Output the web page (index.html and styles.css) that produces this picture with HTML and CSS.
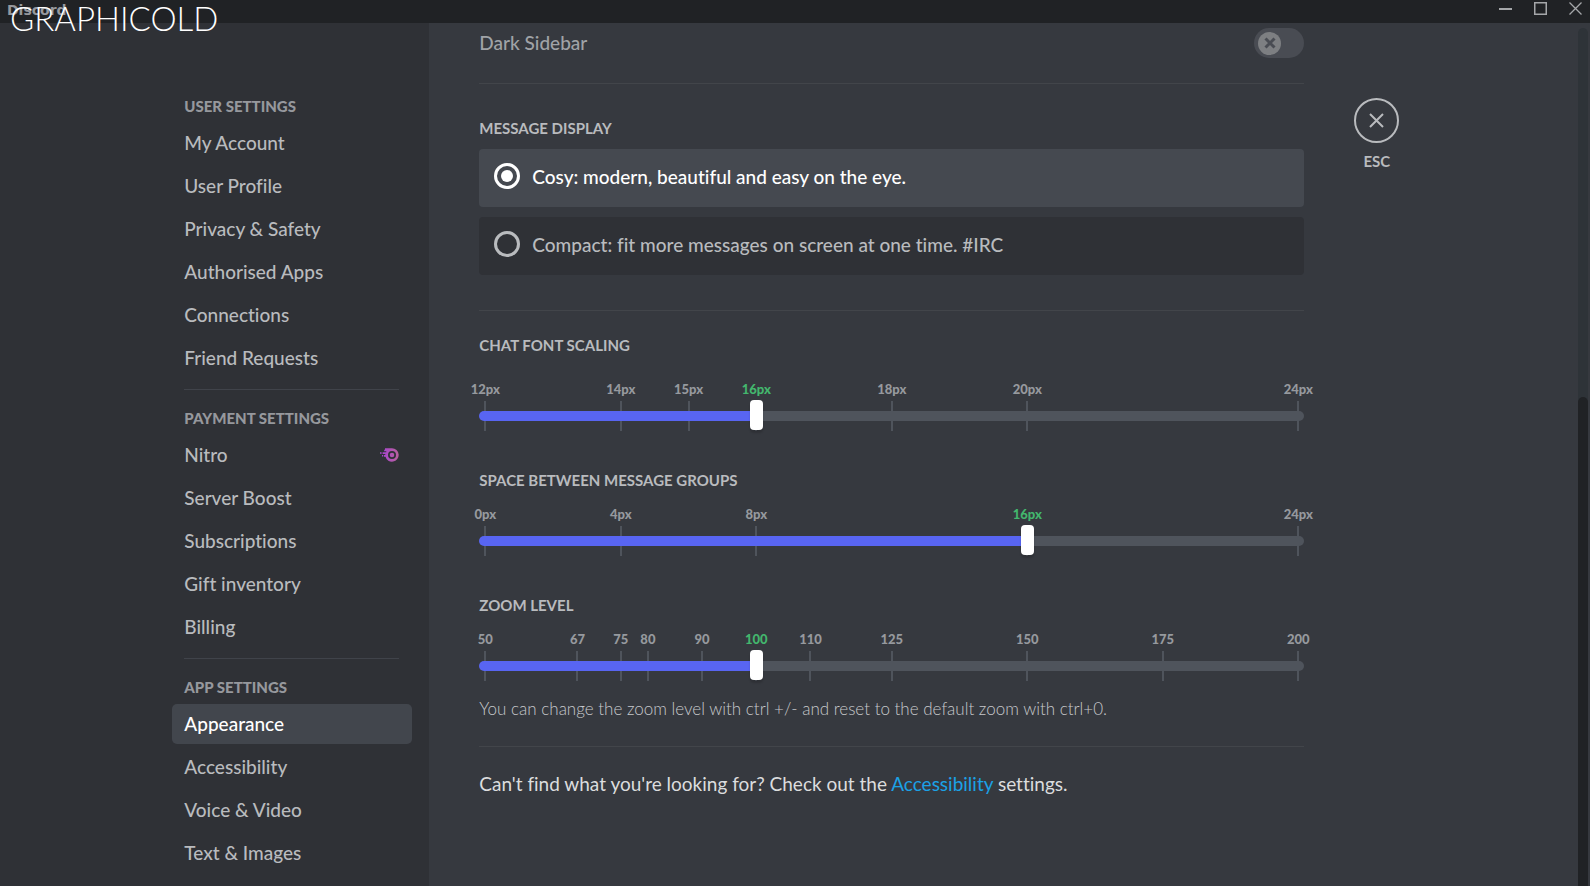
FILE: index.html
```html
<!DOCTYPE html>
<html lang="en">

<head>
    <meta charset="utf-8">
    <meta name="viewport" content="width=device-width, initial-scale=1">
    <title>Discord</title>
    <link rel="stylesheet" href="styles.css">
</head>

<body>
    <header class="titlebar">
        <span class="wordmark">Discord</span>
        <div class="window-buttons">
            <button type="button" aria-label="Minimise">
                <svg width="13" height="13" viewBox="0 0 13 13"><path d="M0 7H13" stroke-width="2" /></svg>
            </button>
            <button type="button" aria-label="Maximise">
                <svg width="13" height="13" viewBox="0 0 13 13"><path d="M.75 .75H12.25V12.25H.75Z" stroke-width="1.5" /></svg>
            </button>
            <button type="button" aria-label="Close window">
                <svg width="13" height="13" viewBox="0 0 13 13"><path d="M.5 .5L12.5 12.5M12.5 .5L.5 12.5" stroke-width="1.3" /></svg>
            </button>
        </div>
    </header>
    <div class="watermark">GRAPHICOLD</div>

    <div class="settings">
        <div class="sidebar">
            <nav class="menu">
                <h2>USER SETTINGS</h2>
                <ul>
                    <li><a href="#">My Account</a></li>
                    <li><a href="#">User Profile</a></li>
                    <li><a href="#">Privacy &amp; Safety</a></li>
                    <li><a href="#">Authorised Apps</a></li>
                    <li><a href="#">Connections</a></li>
                    <li><a href="#">Friend Requests</a></li>
                </ul>
                <hr>
                <h2>PAYMENT SETTINGS</h2>
                <ul>
                    <li><a href="#">Nitro
                        <svg class="nitro" width="19" height="14" viewBox="0 0 19 14">
                            <defs>
                                <linearGradient id="nitroFill" x1="0" x2="1">
                                    <stop offset="0" stop-color="#a845cf" />
                                    <stop offset="1" stop-color="#b8619c" />
                                </linearGradient>
                            </defs>
                            <path fill="url(#nitroFill)" fill-rule="evenodd" d="M5 .3H12A6.7 6.7 0 1 1 5.5 8.7H4V7H5.3V6H2.6V4.3H6.3V3.2H4.2V1.8H5ZM12 3A4 4 0 1 0 12 11A4 4 0 1 0 12 3ZM12 4.7A2.3 2.3 0 1 1 12 9.3A2.3 2.3 0 1 1 12 4.7Z" />
                            <path fill="#a845cf" d="M0 4.3H1.6V5.8H0ZM2 7H3.2V8.5H2Z" />
                        </svg></a></li>
                    <li><a href="#">Server Boost</a></li>
                    <li><a href="#">Subscriptions</a></li>
                    <li><a href="#">Gift inventory</a></li>
                    <li><a href="#">Billing</a></li>
                </ul>
                <hr>
                <h2>APP SETTINGS</h2>
                <ul>
                    <li><a href="#" class="selected">Appearance</a></li>
                    <li><a href="#">Accessibility</a></li>
                    <li><a href="#">Voice &amp; Video</a></li>
                    <li><a href="#">Text &amp; Images</a></li>
                </ul>
            </nav>
        </div>

        <main class="content">
            <div class="column">
                <div class="switch-row">
                    <label for="darkSidebar">Dark Sidebar</label>
                    <span class="switch">
                        <input type="checkbox" id="darkSidebar" disabled>
                        <svg width="12" height="12" viewBox="0 0 12 12"><path d="M1.5 1.5L10.5 10.5M10.5 1.5L1.5 10.5" /></svg>
                    </span>
                </div>
                <hr>

                <h3 class="display-title">MESSAGE DISPLAY</h3>
                <div class="options">
                    <label class="option">
                        <input type="radio" name="display" checked>
                        <span>Cosy: modern, beautiful and easy on the eye.</span>
                    </label>
                    <label class="option">
                        <input type="radio" name="display">
                        <span>Compact: fit more messages on screen at one time. #IRC</span>
                    </label>
                </div>
                <hr>

                <section class="setting font-scaling">
                    <h3><label for="fontScale">CHAT FONT SCALING</label></h3>
                    <div class="slider" style="--min: 12; --max: 24; --current: 16">
                        <div class="marks">
                            <span class="mark" style="--value: 12">12px</span>
                            <span class="mark" style="--value: 14">14px</span>
                            <span class="mark" style="--value: 15">15px</span>
                            <span class="mark active" style="--value: 16">16px</span>
                            <span class="mark" style="--value: 18">18px</span>
                            <span class="mark" style="--value: 20">20px</span>
                            <span class="mark" style="--value: 24">24px</span>
                        </div>
                        <input type="range" id="fontScale" min="12" max="24" value="16">
                    </div>
                </section>

                <section class="setting">
                    <h3><label for="groupSpace">SPACE BETWEEN MESSAGE GROUPS</label></h3>
                    <div class="slider" style="--min: 0; --max: 24; --current: 16">
                        <div class="marks">
                            <span class="mark" style="--value: 0">0px</span>
                            <span class="mark" style="--value: 4">4px</span>
                            <span class="mark" style="--value: 8">8px</span>
                            <span class="mark active" style="--value: 16">16px</span>
                            <span class="mark" style="--value: 24">24px</span>
                        </div>
                        <input type="range" id="groupSpace" min="0" max="24" value="16">
                    </div>
                </section>

                <section class="setting">
                    <h3><label for="zoomLevel">ZOOM LEVEL</label></h3>
                    <div class="slider" style="--min: 50; --max: 200; --current: 100">
                        <div class="marks">
                            <span class="mark" style="--value: 50">50</span>
                            <span class="mark" style="--value: 67">67</span>
                            <span class="mark" style="--value: 75">75</span>
                            <span class="mark" style="--value: 80">80</span>
                            <span class="mark" style="--value: 90">90</span>
                            <span class="mark active" style="--value: 100">100</span>
                            <span class="mark" style="--value: 110">110</span>
                            <span class="mark" style="--value: 125">125</span>
                            <span class="mark" style="--value: 150">150</span>
                            <span class="mark" style="--value: 175">175</span>
                            <span class="mark" style="--value: 200">200</span>
                        </div>
                        <input type="range" id="zoomLevel" min="50" max="200" value="100">
                    </div>
                </section>
                <p class="note">You can change the zoom level with ctrl +/- and reset to the default zoom with ctrl+0.</p>
                <hr>
                <p class="more">Can't find what you're looking for? Check out the <a href="#">Accessibility</a> settings.</p>
            </div>

            <div class="close">
                <button type="button" aria-label="Close settings">
                    <svg width="15" height="15" viewBox="0 0 15 15"><path d="M1 1L14 14M14 1L1 14" /></svg>
                </button>
                <span>ESC</span>
            </div>

            <div class="scrollbar">
                <div class="scroll-thumb"></div>
            </div>
        </main>
    </div>

    <script>
        // Keep the filled part of each track in step with its thumb
        document.querySelectorAll(".slider input").forEach(function (input) {
            input.addEventListener("input", function () {
                input.parentNode.style.setProperty("--current", input.value);
            });
        });
    </script>
</body>

</html>
```

FILE: styles.css
```css
* {
    box-sizing: border-box;
}

body {
    margin: 0;
    height: 100vh;
    display: flex;
    flex-direction: column;
    overflow: hidden;
    background: #36393f;
    color: #b9bbbe;
    font-family: Lato, "Noto Sans", sans-serif;
    font-size: 19px;
    font-weight: 500;
    font-variant-ligatures: no-common-ligatures;
    line-height: 24px;
}

h2,
h3,
p,
ul {
    margin: 0;
    padding: 0;
}

h2,
h3 {
    font-size: 15px;
    line-height: 20px;
    font-weight: 700;
}

hr {
    width: 100%;
    height: 1px;
    margin: 0;
    border: 0;
    background: #42454a;
}

button {
    padding: 0;
    border: 0;
    background: none;
    cursor: pointer;
}

svg {
    display: block;
    fill: none;
}

/* Title bar */
.titlebar {
    flex: none;
    display: flex;
    justify-content: space-between;
    height: 23px;
    padding: 0 8px 0 7px;
    background: #202225;
}

.wordmark {
    color: #96989d;
    font-family: "DejaVu Sans", sans-serif;
    font-size: 14px;
    font-weight: 700;
    line-height: 20px;
}

.window-buttons {
    display: flex;
    gap: 22px;
    padding-top: 2px;
}

.window-buttons button {
    height: 13px;
}

.window-buttons svg {
    stroke: #a5a7aa;
}

.watermark {
    position: absolute;
    top: 0;
    left: 10px;
    color: #fff;
    font-size: 33px;
    font-weight: 300;
    line-height: 36px;
}

/* Layout */
.settings {
    flex: 1;
    display: flex;
    min-height: 0;
}

.sidebar {
    flex: none;
    display: flex;
    justify-content: flex-end;
    width: 27%;
    padding: 73px 17px 0 0;
    background: #2f3136;
}

.content {
    flex: 1;
    display: flex;
    padding-left: 50px;
}

.column {
    flex: 1;
    max-width: 825px;
    padding-top: 5px;
}

/* Sidebar menu */
.menu {
    width: 240px;
}

.menu h2 {
    margin: 0 12px 7px;
    color: #96989d;
    font-weight: 900;
}

.menu ul {
    display: flex;
    flex-direction: column;
    gap: 3px;
    list-style: none;
}

.menu a {
    display: flex;
    align-items: center;
    justify-content: space-between;
    height: 40px;
    padding: 0 13px 0 12px;
    border-radius: 5px;
    color: #b9bbbe;
    text-decoration: none;
}

.menu a:hover {
    background: #393c43;
}

.menu a.selected {
    background: #42464d;
    color: #fff;
}

.menu hr {
    width: auto;
    margin: 11px 13px 18px 12px;
    background: #40434a;
}

/* Dark sidebar switch */
.switch-row {
    display: flex;
    align-items: center;
    justify-content: space-between;
    height: 30px;
    margin-bottom: 25px;
    color: #a0a3a7;
}

.switch {
    display: grid;
    align-items: center;
}

.switch input,
.switch svg {
    grid-area: 1 / 1;
}

.switch input {
    appearance: none;
    display: flex;
    align-items: center;
    width: 50px;
    height: 30px;
    margin: 0;
    padding-left: 4px;
    border-radius: 15px;
    background: #494c53;
}

.switch input::before {
    content: "";
    width: 23px;
    height: 23px;
    border-radius: 50%;
    background: #7d7f82;
}

.switch svg {
    margin-left: 10px;
    stroke: #494c53;
    stroke-width: 3;
    z-index: 1;
}

/* Message display */
.display-title {
    margin: 34px 0 11px;
}

.options {
    display: flex;
    flex-direction: column;
    gap: 10px;
    margin-bottom: 35px;
}

.option {
    display: flex;
    align-items: center;
    gap: 12px;
    height: 58px;
    padding: 0 15px 2px;
    border-radius: 4px;
    background: #2f3136;
    cursor: pointer;
}

.option:has(:checked) {
    background: #454950;
    color: #fff;
}

.option input {
    appearance: none;
    display: grid;
    place-items: center;
    width: 26px;
    height: 26px;
    margin: 0 0 2px;
    border: 3px solid currentColor;
    border-radius: 50%;
    color: inherit;
}

.option input:checked::before {
    content: "";
    width: 12px;
    height: 12px;
    border-radius: 50%;
    background: #fff;
}

/* Sliders */
.setting {
    margin-top: 39px;
}

.font-scaling {
    margin-top: 24px;
}

.slider {
    margin-top: 16px;
}

.font-scaling .slider {
    margin-top: 26px;
}

.marks {
    position: relative;
    height: 20px;
    margin: 0 6px;
}

.mark {
    position: absolute;
    left: calc((var(--value) - var(--min)) / (var(--max) - var(--min)) * 100%);
    display: flex;
    flex-direction: column;
    align-items: center;
    gap: 3px;
    width: 40px;
    margin-left: -20px;
    color: #96999e;
    font-size: 13px;
    font-weight: 900;
    line-height: 17px;
}

.mark::after {
    content: "";
    width: 2px;
    height: 30px;
    background: #4f545c;
}

.mark.active {
    color: #43b66d;
}

.slider input {
    appearance: none;
    position: relative;
    display: block;
    width: 100%;
    height: 30px;
    margin: 0;
    background: none;
    cursor: pointer;
}

.slider input::-webkit-slider-runnable-track {
    height: 10px;
    border-radius: 5px;
    background: linear-gradient(#5865f2, #5865f2) no-repeat #4f545c;
    background-size: calc((var(--current) - var(--min)) / (var(--max) - var(--min)) * 100%) 100%;
}

.slider input::-webkit-slider-thumb {
    appearance: none;
    width: 13px;
    height: 30px;
    margin-top: -11px;
    border-radius: 4px;
    background: #fff;
    box-shadow: 0 3px 2px rgba(0, 0, 0, .15);
}

.note {
    margin: 16px 0 25px;
    color: #c6c8cb;
    font-size: 17px;
    font-weight: 300;
}

.more {
    margin-top: 25px;
    color: #dcddde;
    font-weight: 400;
}

.more a {
    color: #1ba1e6;
    text-decoration: none;
}

/* Close button */
.close {
    flex: none;
    display: flex;
    flex-direction: column;
    align-items: center;
    margin: 75px auto 0 50px;
    font-size: 15px;
    font-weight: 700;
    line-height: 20px;
}

.close button {
    display: grid;
    place-items: center;
    width: 45px;
    height: 45px;
    margin-bottom: 8px;
    border: 2px solid #b9bbbe;
    border-radius: 50%;
}

.close svg {
    stroke: #b9bbbe;
    stroke-width: 2;
}

/* Scrollbar */
.scrollbar {
    flex: none;
    display: flex;
    align-items: flex-end;
    width: 10px;
    margin: 5px 2px 0 0;
    border-radius: 5px 5px 0 0;
    background: #2e3338;
}

.scroll-thumb {
    width: 100%;
    height: 57%;
    border-radius: 5px 5px 0 0;
    background: #202225;
}
```
